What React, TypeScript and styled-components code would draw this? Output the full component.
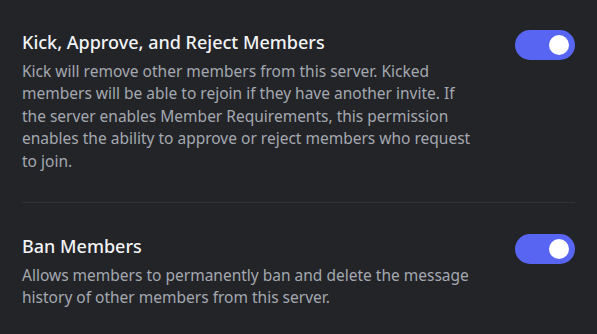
import React from "react";
import styled, { createGlobalStyle } from "styled-components";

const Global = createGlobalStyle`
  html, body { margin: 0; padding: 0; background: #232428; }
  body { font-family: "Noto Sans", "DejaVu Sans", sans-serif; }
`;

const Page = styled.div`
  width: 597px;
  height: 334px;
  box-sizing: border-box;
  padding: 30px 22px 0 22px;
  background: #232428;
  overflow: hidden;
`;

const Section = styled.section<{ $last?: boolean }>`
  display: flex;
  justify-content: space-between;
  align-items: flex-start;
  padding-bottom: ${(p) => (p.$last ? 0 : 30)}px;
  margin-bottom: ${(p) => (p.$last ? 0 : 31)}px;
  border-bottom: ${(p) => (p.$last ? "none" : "1px solid #303136")};
`;

const TextCol = styled.div`
  width: 459px;
`;

const Title = styled.div`
  color: #f2f3f5;
  font-size: 18px;
  font-weight: 500;
  line-height: 24px;
`;

const Desc = styled.div`
  margin-top: 6px;
  color: #a4a8b0;
  font-size: 15.5px;
  line-height: 22.4px;
`;

const Toggle = styled.div<{ $on: boolean }>`
  flex: none;
  width: 60px;
  height: 30px;
  border-radius: 15px;
  background: ${(p) => (p.$on ? "#5865f2" : "#80848e")};
  display: flex;
  align-items: center;
  justify-content: ${(p) => (p.$on ? "flex-end" : "flex-start")};
  padding: 0 6px;
  box-sizing: border-box;
`;

const Knob = styled.div`
  width: 20px;
  height: 20px;
  border-radius: 50%;
  background: #ffffff;
`;

const items = [
  {
    title: "Kick, Approve, and Reject Members",
    desc: "Kick will remove other members from this server. Kicked members will be able to rejoin if they have another invite. If the server enables Member Requirements, this permission enables the ability to approve or reject members who request to join.",
  },
  {
    title: "Ban Members",
    desc: "Allows members to permanently ban and delete the message history of other members from this server.",
  },
];

export default function App() {
  return (
    <>
      <Global />
      <Page>
        {items.map((it, i) => (
          <Section key={it.title} $last={i === items.length - 1}>
            <TextCol>
              <Title>{it.title}</Title>
              <Desc>{it.desc}</Desc>
            </TextCol>
            <Toggle $on>
              <Knob />
            </Toggle>
          </Section>
        ))}
      </Page>
    </>
  );
}
